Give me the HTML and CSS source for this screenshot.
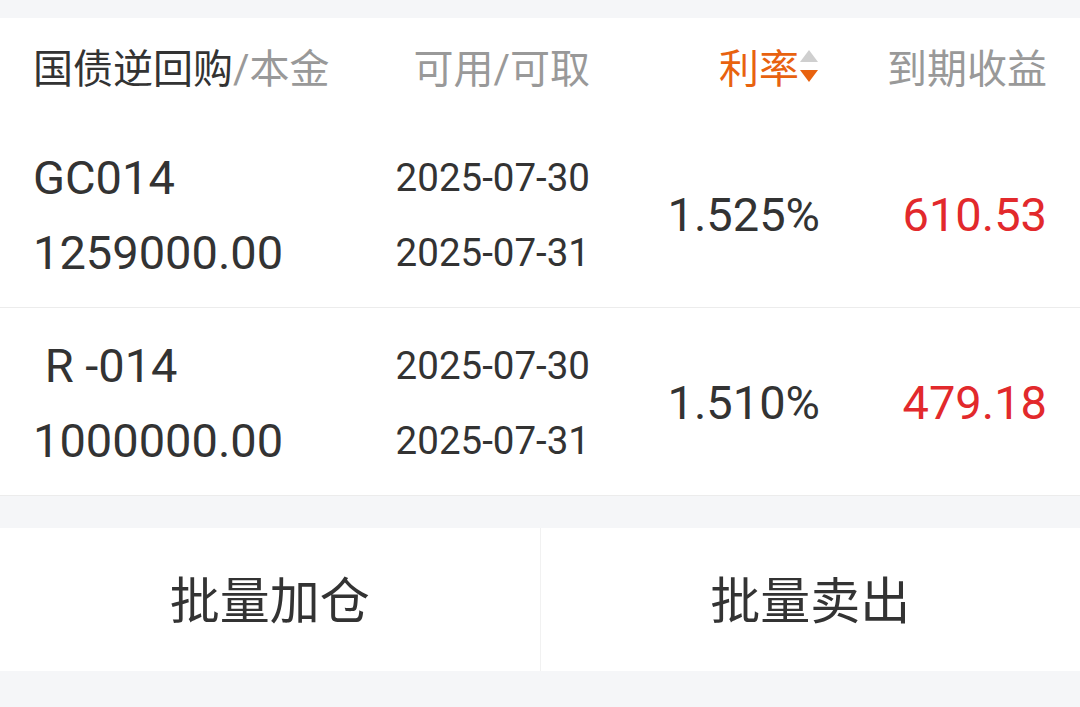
FILE: index.html
```html
<!DOCTYPE html>
<html lang="zh-CN">
<head>
<meta charset="utf-8">
<link rel="stylesheet" href="styles.css">
</head>
<body>
<div class="page">
  <div class="topgap"></div>
  <section class="table">
    <div class="row head">
      <div class="c1"><span class="dark">国债逆回购</span>/本金</div>
      <div class="c2">可用/可取</div>
      <div class="c3 active">利率<span class="sort"><svg width="22" height="36" viewBox="0 0 22 36"><polygon points="11,1 20,13 2,13" fill="#cfcfcf"/><polygon points="2,21 20,21 11,33" fill="#e8620f"/></svg></span></div>
      <div class="c4">到期收益</div>
    </div>
    <div class="row item">
      <div class="c1 stack big"><span>GC014</span><span>1259000.00</span></div>
      <div class="c2 stack date"><span>2025-07-30</span><span>2025-07-31</span></div>
      <div class="c3 big">1.525%</div>
      <div class="c4 big red">610.53</div>
    </div>
    <div class="row item">
      <div class="c1 stack big"><span class="pre"> R -014</span><span>1000000.00</span></div>
      <div class="c2 stack date"><span>2025-07-30</span><span>2025-07-31</span></div>
      <div class="c3 big">1.510%</div>
      <div class="c4 big red">479.18</div>
    </div>
  </section>
  <div class="midgap"></div>
  <div class="actions">
    <button class="btn">批量加仓</button>
    <button class="btn">批量卖出</button>
  </div>
</div>
</body>
</html>
```
FILE: styles.css
```css
* { box-sizing: border-box; }
html, body {
  margin: 0;
  padding: 0;
  background: #f5f6f8;
  font-family: Roboto, "Noto Sans CJK SC", "Noto Sans", sans-serif;
  color: #333333;
}
.page {
  width: 1080px;
  height: 707px;
  background: #f5f6f8;
}
.topgap { height: 18px; }
.table { background: #ffffff; }
.row {
  display: grid;
  grid-template-columns: 1fr 230px 230px 227px;
  padding: 0 33px;
  align-items: center;
}
.head {
  height: 102px;
  padding-bottom: 6px;
  font-size: 40px;
  color: #999999;
}
.head .dark { color: #333333; }
.item {
  height: 188px;
  padding-top: 2px;
  border-bottom: 1px solid #ececec;
}
.c2, .c3, .c4 { text-align: right; justify-self: end; }
.c1 { justify-self: start; }
.active {
  color: #e8620f;
  display: flex;
  align-items: center;
}
.sort {
  display: inline-flex;
  margin-left: -1px;
  margin-top: 2px;
}
.stack {
  display: flex;
  flex-direction: column;
  line-height: 75px;
}
.c2.stack { align-items: flex-end; }
.big { font-size: 47px; }
.date { font-size: 38.5px; }
.red { color: #e2292c; }
.pre { white-space: pre; }
.midgap { height: 32px; }
.actions {
  display: flex;
  height: 143px;
  background: #ffffff;
}
.btn {
  flex: 1;
  border: 0;
  background: #ffffff;
  font-family: "Noto Sans CJK SC", sans-serif;
  font-size: 50px;
  color: #333333;
  padding: 0 0 6px 0;
}
.btn + .btn { border-left: 1px solid #f1f1f1; }
```
